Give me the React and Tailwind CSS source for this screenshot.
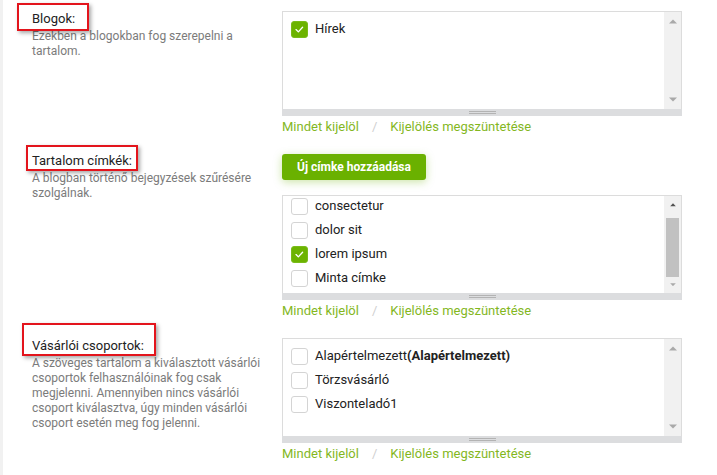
import React from 'react';

function Check({ checked }) {
  if (checked) {
    return (
      <span className="flex h-[17px] w-[17px] shrink-0 items-center justify-center rounded-[3px] border border-[#79bc1a] bg-[#6cb300]">
        <svg width="17" height="17" viewBox="0 0 17 17">
          <path d="M4.6 8.6 L7.2 11.2 L12 5.9" fill="none" stroke="#fff" strokeWidth="1.5" strokeLinecap="round" strokeLinejoin="round" />
        </svg>
      </span>
    );
  }
  return <span className="h-[17px] w-[17px] shrink-0 rounded-[3px] border border-[#d4d4d4] bg-white" />;
}

function Arrow({ up, dark }) {
  return (
    <svg width="8" height="5" viewBox="0 0 8 5">
      <polygon points={up ? '0,4.5 8,4.5 4,0.5' : '0,0.5 8,0.5 4,4.5'} fill={dark ? '#505050' : '#a9a9a9'} />
    </svg>
  );
}

function ListBox({ items, offset = false, thumb = false }) {
  return (
    <div className="w-[400px]">
      <div className="flex h-[98px] border border-b-0 border-[#dcdcdc] bg-white">
        <div className="flex-1 overflow-hidden">
          <div className={offset ? 'pt-[5px] -translate-y-[7px]' : 'pt-[5px]'}>
            {items.map((it, i) => (
              <div key={i} className="flex h-6 items-center gap-[7px] pl-[8px] text-[13px] text-[#222]">
                <Check checked={it.checked} />
                <span>{it.label}</span>
              </div>
            ))}
          </div>
        </div>
        <div className="flex w-[17px] flex-col items-center bg-[#f1f1f1] py-[7px]">
          <Arrow up dark={thumb} />
          <div className="flex flex-1 w-full px-[2px] py-[6px]">
            {thumb && <div className="mt-[5px] h-[59px] w-full bg-[#c1c1c1]" />}
          </div>
          <Arrow />
        </div>
      </div>
      <div className="flex h-[7px] flex-col items-center justify-center gap-[1px] bg-[#dcdddf]">
        <div className="h-px w-[27px] bg-[#b3b3b3]" />
        <div className="h-px w-[27px] bg-[#b3b3b3]" />
      </div>
    </div>
  );
}

function Links() {
  return (
    <div className="mt-[3px] text-[13px] leading-4">
      <span className="text-[#84b71f]">Mindet kijelöl</span>
      <span className="ml-[13px] mr-[13px] text-[#cfcfcf]">/</span>
      <span className="text-[#84b71f]">Kijelölés megszüntetése</span>
    </div>
  );
}

function Label({ text, box }) {
  return (
    <div className="text-[13px] leading-4 text-[#222]">
      <span className="relative inline-block">
        {text}
        <span className={'pointer-events-none absolute border-2 border-[#e3141c] shadow-[2px_2px_4px_rgba(0,0,0,0.35)] ' + box} />
      </span>
    </div>
  );
}

function Desc({ children }) {
  return <p className="mt-[2px] w-[240px] text-[12px] leading-[15px] text-[#7b7b7b]">{children}</p>;
}

export default function App() {
  return (
    <div className="min-h-screen border-l-[3px] border-[#f1f1f1] bg-white pl-[29px] pt-[11px] font-['Roboto',sans-serif]">
      <div className="flex">
        <div className="w-[250px] shrink-0">
          <Label text="Blogok:" box="left-[-15px] top-[-8px] w-[72px] h-[28px]" />
          <Desc>Ezekben a blogokban fog szerepelni a tartalom.</Desc>
        </div>
        <div>
          <ListBox items={[{ label: 'Hírek', checked: true }]} />
          <Links />
        </div>
      </div>

      <div className="mt-[18px] flex">
        <div className="w-[250px] shrink-0">
          <Label text="Tartalom címkék:" box="left-[-6px] top-[-8px] w-[112px] h-[26px]" />
          <Desc>A blogban történő bejegyzések szűrésére szolgálnak.</Desc>
        </div>
        <div>
          <button className="mt-px h-[26px] rounded-[3px] bg-[#6ab100] px-[15px] text-[12px] font-bold text-white shadow-[0_2px_8px_rgba(106,177,0,0.35)]">
            Új címke hozzáadása
          </button>
          <div className="mt-[15px]">
            <ListBox
              offset
              thumb
              items={[
                { label: 'consectetur' },
                { label: 'dolor sit' },
                { label: 'lorem ipsum', checked: true },
                { label: 'Minta címke' },
              ]}
            />
          </div>
          <Links />
        </div>
      </div>

      <div className="mt-[19px] flex">
        <div className="w-[250px] shrink-0">
          <Label text="Vásárlói csoportok:" box="left-[-10px] top-[-15px] w-[134px] h-[33px]" />
          <Desc>
            A szöveges tartalom a kiválasztott vásárlói csoportok felhasználóinak fog csak megjelenni. Amennyiben nincs vásárlói csoport kiválasztva, úgy minden vásárlói csoport esetén meg fog jelenni.
          </Desc>
        </div>
        <div>
          <ListBox
            items={[
              { label: <>Alapértelmezett<b>(Alapértelmezett)</b></> },
              { label: 'Törzsvásárló' },
              { label: 'Viszonteladó1' },
            ]}
          />
          <Links />
        </div>
      </div>
    </div>
  );
}
